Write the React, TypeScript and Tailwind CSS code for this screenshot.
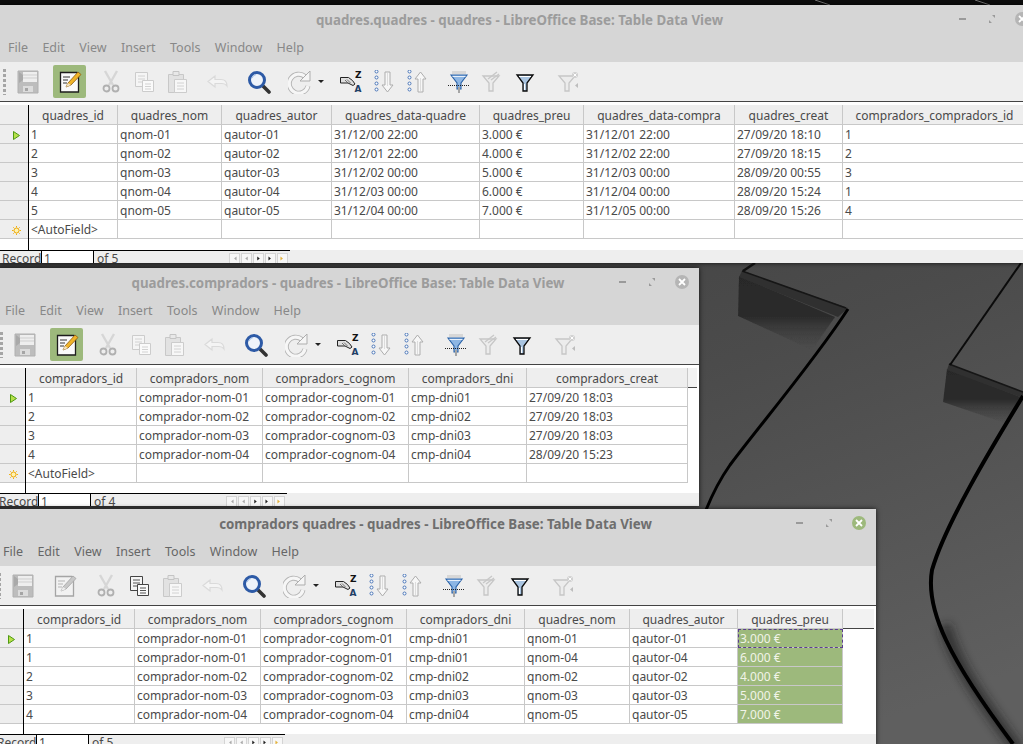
import type { ReactNode } from 'react';

type Col = { name: string; w: string };

// widths have to be written out so tailwind picks them up
const quadresCols: Col[] = [
  { name: 'quadres_id', w: 'w-[89px]' },
  { name: 'quadres_nom', w: 'w-[104px]' },
  { name: 'quadres_autor', w: 'w-[110px]' },
  { name: 'quadres_data-quadre', w: 'w-[148px]' },
  { name: 'quadres_preu', w: 'w-[104px]' },
  { name: 'quadres_data-compra', w: 'w-[151px]' },
  { name: 'quadres_creat', w: 'w-[108px]' },
  { name: 'compradors_compradors_id', w: 'w-[184px]' },
];

const quadresRows = [
  ['1', 'qnom-01', 'qautor-01', '31/12/00 22:00', '3.000 €', '31/12/01 22:00', '27/09/20 18:10', '1'],
  ['2', 'qnom-02', 'qautor-02', '31/12/01 22:00', '4.000 €', '31/12/02 22:00', '27/09/20 18:15', '2'],
  ['3', 'qnom-03', 'qautor-03', '31/12/02 00:00', '5.000 €', '31/12/03 00:00', '28/09/20 00:55', '3'],
  ['4', 'qnom-04', 'qautor-04', '31/12/03 00:00', '6.000 €', '31/12/04 00:00', '28/09/20 15:24', '1'],
  ['5', 'qnom-05', 'qautor-05', '31/12/04 00:00', '7.000 €', '31/12/05 00:00', '28/09/20 15:26', '4'],
  ['<AutoField>', '', '', '', '', '', '', ''],
];

const compradorsCols: Col[] = [
  { name: 'compradors_id', w: 'w-[111px]' },
  { name: 'compradors_nom', w: 'w-[126px]' },
  { name: 'compradors_cognom', w: 'w-[146px]' },
  { name: 'compradors_dni', w: 'w-[118px]' },
  { name: 'compradors_creat', w: 'w-[161px]' },
];

const compradorsRows = [
  ['1', 'comprador-nom-01', 'comprador-cognom-01', 'cmp-dni01', '27/09/20 18:03'],
  ['2', 'comprador-nom-02', 'comprador-cognom-02', 'cmp-dni02', '27/09/20 18:03'],
  ['3', 'comprador-nom-03', 'comprador-cognom-03', 'cmp-dni03', '27/09/20 18:03'],
  ['4', 'comprador-nom-04', 'comprador-cognom-04', 'cmp-dni04', '28/09/20 15:23'],
  ['<AutoField>', '', '', '', ''],
];

const joinCols: Col[] = [
  { name: 'compradors_id', w: 'w-[111px]' },
  { name: 'compradors_nom', w: 'w-[126px]' },
  { name: 'compradors_cognom', w: 'w-[146px]' },
  { name: 'compradors_dni', w: 'w-[118px]' },
  { name: 'quadres_nom', w: 'w-[105px]' },
  { name: 'quadres_autor', w: 'w-[108px]' },
  { name: 'quadres_preu', w: 'w-[105px]' },
];

const joinRows = [
  ['1', 'comprador-nom-01', 'comprador-cognom-01', 'cmp-dni01', 'qnom-01', 'qautor-01', '3.000 €'],
  ['1', 'comprador-nom-01', 'comprador-cognom-01', 'cmp-dni01', 'qnom-04', 'qautor-04', '6.000 €'],
  ['2', 'comprador-nom-02', 'comprador-cognom-02', 'cmp-dni02', 'qnom-02', 'qautor-02', '4.000 €'],
  ['3', 'comprador-nom-03', 'comprador-cognom-03', 'cmp-dni03', 'qnom-03', 'qautor-03', '5.000 €'],
  ['4', 'comprador-nom-04', 'comprador-cognom-04', 'cmp-dni04', 'qnom-05', 'qautor-05', '7.000 €'],
];

const menus = ['File', 'Edit', 'View', 'Insert', 'Tools', 'Window', 'Help'];

function Wallpaper() {
  return (
    <svg className="absolute inset-0" width="1023" height="744" viewBox="0 0 1023 744">
      <defs>
        <linearGradient id="wall" x1="0.3" y1="0" x2="0.8" y2="1">
          <stop offset="0" stopColor="#3a3a3a" />
          <stop offset="0.55" stopColor="#4b4b4b" />
          <stop offset="1" stopColor="#5f5f5f" />
        </linearGradient>
        <linearGradient id="drop" x1="0" y1="0" x2="0" y2="1">
          <stop offset="0" stopColor="#282828" />
          <stop offset="0.55" stopColor="#2c2c2c" />
          <stop offset="1" stopColor="#3f3f3f" stopOpacity="0" />
        </linearGradient>
        <filter id="soft" x="-30%" y="-30%" width="160%" height="160%">
          <feGaussianBlur stdDeviation="5" />
        </filter>
        <filter id="soft1" x="-10%" y="-10%" width="120%" height="120%">
          <feGaussianBlur stdDeviation="0.6" />
        </filter>
      </defs>
      <rect width="1023" height="744" fill="url(#wall)" />
      <rect width="1023" height="5" fill="#0d0d0d" />
      <path d="M815 0 L830 5 M975 0 L990 5" stroke="#777" strokeWidth="1" />

      <path d="M739 276 L835 317 L812 350 L738 316 Z" fill="url(#drop)" filter="url(#soft1)" />
      <path d="M742 271 L848 308 L838 317 L739 277 Z" fill="#303030" />
      <path d="M742 271 L846 308" stroke="#161616" strokeWidth="1.500" />
      <path d="M755 263 L743 271" stroke="#111" strokeWidth="2.500" />
      <g filter="url(#soft1)">
        <path d="M848 309 C815 360 760 425 730 465 C718 482 712 495 706 510" stroke="#060606" strokeWidth="3" fill="none" />
      </g>

      <path d="M947 369 L1023 398 L1008 424 L943 402 Z" fill="url(#drop)" filter="url(#soft1)" />
      <path d="M949 364 L1023 392 L1023 398 L947 370 Z" fill="#303030" />
      <path d="M949 364 L1023 392" stroke="#161616" strokeWidth="1.500" />
      <path d="M1021 263 L950 365" stroke="#0b0b0b" strokeWidth="2" />

      <path d="M945 625 C955 665 985 705 1018 750" stroke="#1a1a1a" strokeWidth="12" fill="none" filter="url(#soft)" opacity="0.65" />
      <g filter="url(#soft1)">
        <path d="M1023 396 C990 450 945 525 932 570 C925 610 950 660 1013 744" stroke="#050505" strokeWidth="4" fill="none" />
      </g>
    </svg>
  );
}

/* toolbar drawings, all 24x24 */

function SaveIcon() {
  return (
    <svg width="24" height="24" viewBox="0 0 24 24">
      <path d="M2 1h20v22H2z" fill="#bdbdbd" stroke="#b0b0b0" />
      <path d="M3 2l4 3v5l-4 3z" fill="#a9a9a9" />
      <path d="M7 2h14v10H7z" fill="#eeeeee" />
      <path d="M7 5h14M7 8h14" stroke="#cfcfcf" />
      <path d="M7 16h10v6H7z" fill="#dcdcdc" />
      <path d="M9 18h3v3H9z" fill="#a5a5a5" />
    </svg>
  );
}

function EditIcon({ dim }: { dim?: boolean }) {
  const line = dim ? '#a5a5a5' : '#1d1d1d';
  return (
    <svg width="24" height="24" viewBox="0 0 24 24">
      <path d="M2.500 2.500h16.500l1.500 1.500v18h-18z" fill={dim ? '#f2f2f2' : '#fafafa'} stroke={line} strokeWidth="1.300" />
      <path d="M5 7h7M5 10h5M5 13h4" stroke={dim ? '#b5b5b5' : '#333'} strokeWidth="1" />
      <path d="M8 17l2-4L20 2l3 2.500L13 15z" fill={dim ? '#c8c8c8' : '#f0b429'} stroke={dim ? '#a5a5a5' : '#8a5a10'} strokeWidth="0.800" />
      <path d="M8 17l2-4 3 2z" fill={dim ? '#eee' : '#f3e3c0'} />
    </svg>
  );
}

function CutIcon() {
  return (
    <svg width="24" height="24" viewBox="0 0 24 24" fill="none">
      <path d="M6 1l8 14M18 1l-8 14" stroke="#d6d6d6" strokeWidth="2.400" />
      <circle cx="7.500" cy="18.500" r="3" stroke="#b0b0b0" strokeWidth="1.800" />
      <circle cx="16.500" cy="18.500" r="3" stroke="#b0b0b0" strokeWidth="1.800" />
    </svg>
  );
}

function CopyIcon({ dim }: { dim?: boolean }) {
  const stroke = dim ? '#cccccc' : '#444';
  const ln = dim ? '#d2d2d2' : '#555';
  return (
    <svg width="24" height="24" viewBox="0 0 24 24">
      <path d="M3.500 2.500h12v14h-12z" fill="#f5f5f5" stroke={stroke} />
      <path d="M6 6h7M6 9h7M6 12h5" stroke={ln} />
      <path d="M10.500 10.500h11v11h-11z" fill="#fafafa" stroke={stroke} />
      <path d="M13 14h6M13 16.500h6M13 19h6" stroke={ln} />
    </svg>
  );
}

function PasteIcon() {
  return (
    <svg width="24" height="24" viewBox="0 0 24 24">
      <path d="M3.500 4.500h15v18h-15z" fill="#e2e2e2" stroke="#c8c8c8" />
      <path d="M8 1.500h6v4H8z" fill="#e8e8e8" stroke="#c4c4c4" />
      <path d="M9.500 9.500h12v13h-12z" fill="#f7f7f7" stroke="#cccccc" />
      <path d="M12 13h7M12 16h7M12 19h7" stroke="#d2d2d2" />
    </svg>
  );
}

function UndoIcon() {
  return (
    <svg width="24" height="24" viewBox="0 0 24 24" fill="none">
      <path d="M9 6L2 11.500 9 17v-3.500h7c3 0 4 1 5 2.500 0-4-2-6.500-6-6.500H9z" fill="#f4f4f4" stroke="#dadada" strokeWidth="1.200" />
    </svg>
  );
}

function SearchIcon() {
  return (
    <svg width="24" height="24" viewBox="0 0 24 24" fill="none">
      <path d="M15 15l7 7" stroke="#333" strokeWidth="3.600" strokeLinecap="round" />
      <circle cx="10" cy="10" r="7.500" fill="#eef3fa" stroke="#2d5aa6" strokeWidth="3" />
      <path d="M5 8a5.500 5.500 0 0 1 4-3.500" stroke="#9fbde6" strokeWidth="1" />
    </svg>
  );
}

function RedoIcon() {
  return (
    <svg width="24" height="24" viewBox="0 0 24 24" fill="none">
      <path d="M17 6.500a9.500 9.500 0 1 0 3 9.500" stroke="#b4b4b4" strokeWidth="5" />
      <path d="M17 6.500a9.500 9.500 0 1 0 3 9.500" stroke="#f6f6f6" strokeWidth="3.200" />
      <path d="M22 1v10h-10z" fill="#f5f5f5" stroke="#adadad" />
    </svg>
  );
}

function SortAZIcon() {
  return (
    <svg width="24" height="24" viewBox="0 0 24 24">
      <path d="M1.500 7.500h8l4 3 2.500 3.500-2 1.500-5-2.500h-7.500z" fill="#dedede" stroke="#222" strokeWidth="1" />
      <path d="M8 9.500l3.500 3.500M6 10l3 3" stroke="#555" strokeWidth="0.800" />
      <text x="16" y="8" fontSize="9" fontWeight="700" fill="#111" fontFamily="'DejaVu Sans', sans-serif">Z</text>
      <text x="15.500" y="22" fontSize="9" fontWeight="700" fill="#1f3f66" fontFamily="'DejaVu Sans', sans-serif">A</text>
    </svg>
  );
}

function SortArrow({ up }: { up?: boolean }) {
  return (
    <svg width="24" height="24" viewBox="0 0 24 24" fill="none">
      {[1.500, 7.500, 13.500, 19.500].map((y) => (
        <circle key={y} cx="4.500" cy={y} r="1.500" stroke="#4a76b8" strokeWidth="1" fill="#fff" />
      ))}
      <path
        d={up ? 'M15.500 2L21 9h-3v13h-5V9h-3z' : 'M13 2h5v13h3l-5.500 7L10 15h3z'}
        fill="#f7f7f7"
        stroke="#adadad"
      />
      <path d={up ? 'M15.500 8v13' : 'M15.500 3v13'} stroke="#dcdcdc" />
    </svg>
  );
}

function FunnelIcon({ kind }: { kind: 'auto' | 'dim' | 'black' | 'off' }) {
  if (kind === 'auto') {
    return (
      <svg width="24" height="24" viewBox="0 0 24 24" fill="none">
        <path d="M5 1h14v3H5z" fill="#c8c8c8" opacity="0.600" />
        <path d="M4 5h16l-6 8v6h-4v-6z" fill="#8db6e4" stroke="#2a62a8" strokeWidth="1.100" />
        <path d="M5.500 6.500h13" stroke="#e8f0fa" />
        <path d="M1 15.500h22" stroke="#222" strokeDasharray="1 1" />
        <path d="M12 17v6" stroke="#a5a5a5" strokeWidth="2" />
      </svg>
    );
  }
  if (kind === 'black') {
    return (
      <svg width="24" height="24" viewBox="0 0 24 24" fill="none">
        <path d="M4 5h16l-6 8v8h-4v-8z" fill="#a9c4e0" stroke="#0a0a0a" strokeWidth="1.300" />
        <path d="M6 6.500h12" stroke="#ffffff" />
        <path d="M11.500 14v6" stroke="#ffffff" strokeWidth="1" />
      </svg>
    );
  }
  return (
    <svg width="24" height="24" viewBox="0 0 24 24" fill="none">
      <path d="M3 6h16l-6 7v8h-4v-8z" fill="#ececec" stroke="#c6c6c6" strokeWidth="1.300" />
      {kind === 'dim' ? (
        <path d="M8 9l9-7M11 10l8-6" stroke="#c8c8c8" strokeWidth="1.400" />
      ) : (
        <>
          <circle cx="19" cy="5" r="3" fill="#d0d0d0" />
          <path d="M17.500 3.500l3 3m0-3l-3 3" stroke="#fff" />
          <path d="M22 13l-3 2.500 3 2.500z" fill="#bdbdbd" />
        </>
      )}
    </svg>
  );
}

function Slot({ children, className = '' }: { children: ReactNode; className?: string }) {
  return <div className={`flex h-[33px] w-[33px] shrink-0 items-center justify-center ${className}`}>{children}</div>;
}

function Toolbar({ editing, copyOn }: { editing: boolean; copyOn: boolean }) {
  return (
    <div className="flex h-[39px] shrink-0 items-center bg-[#eeeeee]">
      <div className="ml-[3px] h-[26px] w-[3px] bg-[repeating-linear-gradient(#a5a5a5_0_3px,transparent_3px_5px)]" />
      <Slot className="ml-[5px]"><SaveIcon /></Slot>
      <Slot className={`ml-[9px] rounded-[2px] ${editing ? 'bg-[#9db97c]' : ''}`}><EditIcon dim={!editing} /></Slot>
      <Slot className="ml-[8px]"><CutIcon /></Slot>
      <Slot><CopyIcon dim={!copyOn} /></Slot>
      <Slot><PasteIcon /></Slot>
      <Slot className="ml-[8px]"><UndoIcon /></Slot>
      <Slot className="ml-[8px]"><SearchIcon /></Slot>
      <Slot className="ml-[8px]"><RedoIcon /></Slot>
      <div className="ml-[2px] mr-[1px] h-0 w-0 border-x-[3px] border-t-[3px] border-x-transparent border-t-[#222]" />
      <Slot className="ml-[9px]"><SortAZIcon /></Slot>
      <Slot><SortArrow /></Slot>
      <Slot><SortArrow up /></Slot>
      <Slot className="ml-[9px]"><FunnelIcon kind="auto" /></Slot>
      <Slot><FunnelIcon kind="dim" /></Slot>
      <Slot><FunnelIcon kind="black" /></Slot>
      <Slot className="ml-[10px]"><FunnelIcon kind="off" /></Slot>
    </div>
  );
}

function DataTable({ cols, rows, autoRow, selectLast }: { cols: Col[]; rows: string[][]; autoRow: boolean; selectLast?: boolean }) {
  return (
    <div className="flex min-h-0 flex-1 overflow-hidden bg-white pt-[3px] text-[12px] text-[#4a4a4a]">
      {/* row handles */}
      <div className="w-[29px] shrink-0 border-r border-black">
        <div className="h-[20px] border-b border-[#c8c8c8] bg-[#eeeeee]" />
        {rows.map((_, i) => (
          <div key={i} className="flex h-[19px] items-center border-b border-[#c8c8c8] bg-[#eeeeee] pl-[13px] pt-[3px]">
            {i === 0 && (
              <svg width="7" height="9" viewBox="0 0 7 9">
                <path d="M0.500 0.500L6.500 4.500 0.500 8.500z" fill="#b7e04a" stroke="#4f9a12" />
              </svg>
            )}
            {autoRow && i === rows.length - 1 && (
              <svg width="9" height="9" viewBox="0 0 9 9" className="-ml-[1px]">
                <circle cx="4.500" cy="4.500" r="2.500" fill="#fff3b0" stroke="#eda90c" />
                <path d="M4.500 0v1.500M4.500 7.500V9M0 4.500h1.500M7.500 4.500H9M1.300 1.300l1 1M6.700 6.700l1 1M1.300 7.700l1-1M6.700 2.300l1-1" stroke="#f0b010" />
              </svg>
            )}
          </div>
        ))}
      </div>
      <div className="min-w-0 flex-1">
        <div className="flex h-[20px] items-stretch">
          {cols.map((c) => (
            <div key={c.name} className={`${c.w} flex shrink-0 items-center justify-center whitespace-nowrap border-r border-b border-[#c8c8c8] bg-[#eeeeee] pt-[3px]`}>
              {c.name}
            </div>
          ))}
          <div className="mr-[2px] min-w-0 flex-1 border-b border-[#444] bg-[#f2f2f2]" />
        </div>
        {rows.map((row, r) => (
          <div key={r} className="flex h-[19px]">
            {row.map((v, i) => {
              const sel = selectLast && i === row.length - 1;
              return (
                <div
                  key={i}
                  className={`${cols[i].w} shrink-0 whitespace-nowrap border-r border-b border-[#c8c8c8] pl-[2px] leading-[19px] ${
                    sel ? 'bg-[#9db97c] text-[#f1f4e8]' : ''
                  } ${sel && r === 0 ? 'outline-1 -outline-offset-1 outline-dashed outline-[#5b3d8f]' : ''}`}
                >
                  {v}
                </div>
              );
            })}
          </div>
        ))}
      </div>
    </div>
  );
}

function RecordBar({ total }: { total: number }) {
  const glyphs = ['M3 3v5M8 3L5 5.500 8 8z', 'M7 3L4 5.500 7 8z', 'M4 3l3 2.500L4 8z', 'M3 3l3 2.500L3 8zM8 3v5', 'M3 3l3 2.500L3 8z'];
  return (
    <div className="h-[13px] shrink-0 overflow-hidden bg-[#eeeeee] text-[12px] leading-[16px] text-[#4a4a4a]">
      <div className="flex h-[14px] w-[290px] border-t border-black">
        <span className="w-[41px] shrink-0 pl-[2px]">Record</span>
        <span className="w-[53px] shrink-0 border-x border-black bg-white pl-[2px]">1</span>
        <span className="ml-[2px] w-[132px] shrink-0 pl-[1px]">of {total}</span>
        {glyphs.map((d, i) => (
          <span key={i} className="ml-[1px] mt-[2px] flex h-[11px] w-[11px] shrink-0 items-center justify-center border border-[#d4d4d4] bg-[#f7f7f7]">
            <svg width="11" height="11" viewBox="0 0 11 11">
              <path d={d} fill={i === 4 ? '#e3b23c' : i === 0 || i === 1 ? '#a9a9a9' : '#222'} stroke="none" />
            </svg>
          </span>
        ))}
      </div>
    </div>
  );
}

function Window({
  title,
  active,
  className,
  toolbar,
  children,
}: {
  title: string;
  active?: boolean;
  className: string;
  toolbar: ReactNode;
  children: ReactNode;
}) {
  return (
    <div className={`absolute flex flex-col overflow-hidden font-['Noto_Sans',sans-serif] shadow-[0_0_5px_rgba(0,0,0,0.75)] ${className}`}>
      <div className="relative flex h-[57px] shrink-0 flex-col bg-[#d6d6d6]">
        <div className={`flex h-[31px] items-center justify-center text-[13.3px] font-bold ${active ? 'text-[#6e6e6e]' : 'text-[#9c9c9c]'}`}>
          {title}
        </div>
        <div className={`flex gap-[14.4px] pl-[8px] text-[12.5px] leading-[24px] ${active ? 'text-[#666666]' : 'text-[#888888]'}`}>
          {menus.map((m) => (
            <span key={m}>{m}</span>
          ))}
        </div>
        {/* window controls */}
        <div className="absolute right-[10px] top-[7px] flex items-center gap-[16px]">
          <span className="mr-[4px] h-[2px] w-[7px] bg-[#9a9a9a]" />
          <svg width="14" height="14" viewBox="0 0 14 14" className="ml-[-1px]">
            <path d="M4 8v3h3zM10 6V3H7z" fill="#9a9a9a" />
          </svg>
          <span className={`flex h-[14px] w-[14px] items-center justify-center rounded-full ${active ? 'bg-[#9db97c]' : 'bg-[#b5b5b5]'}`}>
            <svg width="8" height="8" viewBox="0 0 8 8">
              <path d="M1 1l6 6M7 1L1 7" stroke="#fff" strokeWidth="1.800" />
            </svg>
          </span>
        </div>
      </div>
      {toolbar}
      <div className="h-[1px] shrink-0 bg-[#444]" />
      {children}
    </div>
  );
}

export default function App() {
  return (
    <div className="relative h-[744px] w-[1023px] overflow-hidden bg-[#3a3a3a]">
      <Wallpaper />

      <Window
        title="quadres.quadres - quadres - LibreOffice Base: Table Data View"
        className="left-0 top-[5px] h-[258px] w-[1039px]"
        toolbar={<Toolbar editing copyOn={false} />}
      >
        <DataTable cols={quadresCols} rows={quadresRows} autoRow />
        <RecordBar total={5} />
      </Window>

      <Window
        title="quadres.compradors - quadres - LibreOffice Base: Table Data View"
        className="left-[-3px] top-[268px] h-[238px] w-[702px]"
        toolbar={<Toolbar editing copyOn={false} />}
      >
        <DataTable cols={compradorsCols} rows={compradorsRows} autoRow />
        <RecordBar total={4} />
      </Window>

      <Window
        active
        title="compradors quadres - quadres - LibreOffice Base: Table Data View"
        className="left-[-5px] top-[509px] h-[238px] w-[881px]"
        toolbar={<Toolbar editing={false} copyOn />}
      >
        <DataTable cols={joinCols} rows={joinRows} autoRow={false} selectLast />
        <RecordBar total={5} />
      </Window>
    </div>
  );
}
